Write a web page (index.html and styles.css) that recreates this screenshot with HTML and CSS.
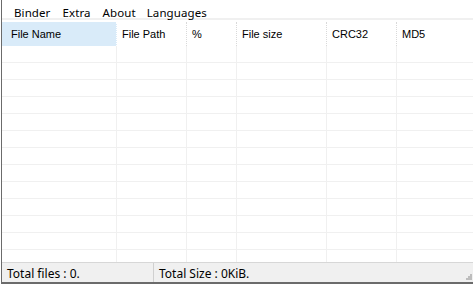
FILE: index.html
```html
<!DOCTYPE html>
<html lang="en">
<head>
  <meta charset="UTF-8" />
  <title>Binder</title>
  <link rel="stylesheet" href="styles.css">
</head>
<body>
  <div class="window">
    <div class="menubar">
      <span class="menu-item">Binder</span>
      <span class="menu-item">Extra</span>
      <span class="menu-item">About</span>
      <span class="menu-item">Languages</span>
    </div>

    <div class="listview">
      <div class="row header">
        <div class="cell active">File Name</div>
        <div class="cell">File Path</div>
        <div class="cell">%</div>
        <div class="cell">File size</div>
        <div class="cell">CRC32</div>
        <div class="cell">MD5</div>
      </div>
      <div id="rows"></div>
    </div>

    <div class="statusbar">
      <div class="status-cell first">Total files : 0.</div>
      <div class="status-cell">Total Size : 0KiB.</div>
      <svg class="grip" width="6" height="6" viewBox="0 0 6 6">
        <rect x="4" y="0" width="2" height="2" fill="#bdbdbd"/>
        <rect x="2" y="2" width="2" height="2" fill="#bdbdbd"/>
        <rect x="4" y="2" width="2" height="2" fill="#bdbdbd"/>
        <rect x="0" y="4" width="2" height="2" fill="#bdbdbd"/>
        <rect x="2" y="4" width="2" height="2" fill="#bdbdbd"/>
        <rect x="4" y="4" width="2" height="2" fill="#bdbdbd"/>
      </svg>
    </div>
  </div>

  <script>
    // empty grid rows
    const rows = document.getElementById("rows");
    for (let i = 0; i < 13; i++) {
      const row = document.createElement("div");
      row.className = "row";
      for (let c = 0; c < 6; c++) {
        const cell = document.createElement("div");
        cell.className = "cell";
        row.appendChild(cell);
      }
      rows.appendChild(row);
    }
  </script>
</body>
</html>
```

FILE: styles.css
```css
html, body {
  margin: 0;
  padding: 0;
  background-color: #fff;
  overflow: hidden;
}
.window {
  width: 472px;
  height: 282px;
  margin-left: 1px;
  border-left: 1px solid #6b6b6b;
  border-bottom: 2px solid #6b6b6b;
  display: flex;
  flex-direction: column;
  font-family: 'Noto Sans', sans-serif;
  color: #000;
}
.menubar {
  height: 20px;
  box-sizing: border-box;
  padding: 6px 0 0 6px;
  display: flex;
  align-items: flex-start;
  font-size: 11.5px;
  line-height: 14px;
  border-bottom: 2px solid #f0f0f0;
}
.menu-item {
  padding: 0 6px;
  letter-spacing: 0.1px;
}
.menu-item:last-child {
  padding-left: 5px;
}
.listview {
  height: 240px;
  margin-top: 2px;
  overflow: hidden;
  font-family: 'Liberation Sans', Arial, sans-serif;
  font-size: 11px;
}
.row {
  display: grid;
  grid-template-columns: 115px 70px 50px 90px 70px 1fr;
  height: 16px;
  border-bottom: 1px solid #f0f0f0;
}
.row .cell {
  border-right: 1px solid #f0f0f0;
}
.row .cell:last-child {
  border-right: none;
}
.header {
  height: 24px;
  border-bottom: none;
}
.header .cell {
  display: flex;
  align-items: center;
  padding-left: 5px;
  border-right: 1px dotted #d9d9d9;
}
.header .cell.active {
  background-color: #d9ebf9;
  padding-left: 9px;
  border-right-color: #fff;
}
.statusbar {
  height: 19px;
  background-color: #f0f0f0;
  border-top: 1px solid #d7d7d7;
  display: flex;
  align-items: center;
  font-size: 12px;
  position: relative;
}
.status-cell {
  padding: 2px 0 0 5px;
}
.status-cell.first {
  box-sizing: border-box;
  width: 152px;
  border-right: 1px solid #d0d0d0;
  height: 19px;
  display: flex;
  align-items: center;
}
.grip {
  position: absolute;
  right: 2px;
  bottom: 2px;
}
```
